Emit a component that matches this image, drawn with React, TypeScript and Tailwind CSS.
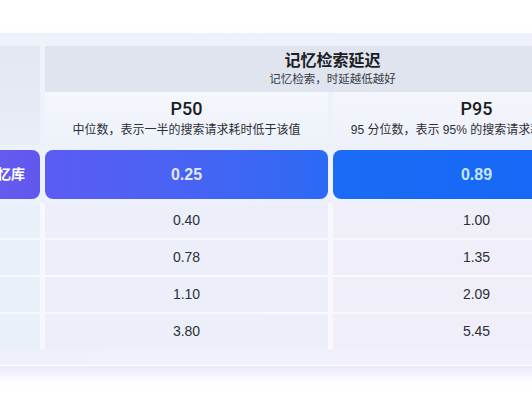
import React from "react";

const font = "font-['Liberation_Sans','Noto_Sans_CJK_SC',sans-serif]";

const rows = [
  { p50: "0.40", p95: "1.00" },
  { p50: "0.78", p95: "1.35" },
  { p50: "1.10", p95: "2.09" },
  { p50: "3.80", p95: "5.45" },
];

const cols = "grid grid-cols-[100px_283px_287px] gap-x-[5px]";

const App: React.FC = () => {
  return (
    <div className={`relative w-[532px] h-[399px] overflow-hidden bg-white ${font}`}>
      <div className="ml-[-72px] mt-[33px] w-[706px] rounded-2xl bg-gradient-to-br from-[#edf2fb] via-[#eef1fa] to-[#f3f0fa] pt-[13px] px-[12px] pb-[16px] border-b border-white shadow-[0_8px_12px_rgba(150,140,240,0.22)]">
        {/* Header */}
        <div className={cols}>
          <div className="row-span-2 rounded-tl-xl bg-gradient-to-b from-[#e2e7f2] to-[#e9edf6]" />
          <div className="col-span-2 h-[46px] bg-[#dfe4ef] flex flex-col items-center justify-center">
            <div className="text-[16px] leading-[18px] font-bold text-[#1d1d24]">
              记忆检索延迟
            </div>
            <div className="text-[11.5px] leading-[15px] mt-[2px] text-[#3a3b44]">
              记忆检索，时延越低越好
            </div>
          </div>
          <div className="h-[53px] bg-gradient-to-b from-[#f4f7fc] to-[#edf2f9] flex flex-col items-center justify-center">
            <div className="font-['Roboto',sans-serif] font-medium text-[18px] leading-[20px] text-[#1b1c22]">
              P50
            </div>
            <div className="text-[12px] leading-[16px] mt-[3px] text-[#2d2e36] whitespace-nowrap">
              中位数，表示一半的搜索请求耗时低于该值
            </div>
          </div>
          <div className="h-[53px] bg-gradient-to-b from-[#f4f6fc] to-[#eef1f9] flex flex-col items-center justify-center">
            <div className="font-['Roboto',sans-serif] font-medium text-[18px] leading-[20px] text-[#1b1c22]">
              P95
            </div>
            <div className="text-[12px] leading-[16px] mt-[3px] text-[#2d2e36] whitespace-nowrap">
              95 分位数，表示 95% 的搜索请求耗时低于该值
            </div>
          </div>
        </div>

        {/* Highlighted row */}
        <div className={`${cols} mt-[5px]`}>
          <div className="h-[49px] rounded-[8px] bg-gradient-to-r from-[#7060f0] to-[#5f57ee] flex items-center justify-center text-[14px] font-bold text-white">
            全量记忆库
          </div>
          <div className="h-[49px] rounded-[8px] bg-gradient-to-r from-[#5b5cf2] to-[#2a6af5] flex items-center justify-center text-[16px] font-bold text-[#e2e6ff]">
            0.25
          </div>
          <div className="h-[49px] rounded-[8px] bg-gradient-to-r from-[#1c6bf6] to-[#1467f6] flex items-center justify-center text-[16px] font-bold text-[#c4e8ff]">
            0.89
          </div>
        </div>

        {/* Data rows */}
        <div className="mt-[4px] flex flex-col gap-[2px] bg-white/50">
          {rows.map((r, i) => (
            <div key={i} className={cols}>
              <div className="h-[35px] bg-[#eaf0f9]" />
              <div className="h-[35px] bg-[#eceff9] flex items-center justify-center text-[14px] text-[#2e2f36]">
                {r.p50}
              </div>
              <div className="h-[35px] bg-[#efeef9] flex items-center justify-center text-[14px] text-[#2e2f36]">
                {r.p95}
              </div>
            </div>
          ))}
        </div>
      </div>
    </div>
  );
};

export default App;
